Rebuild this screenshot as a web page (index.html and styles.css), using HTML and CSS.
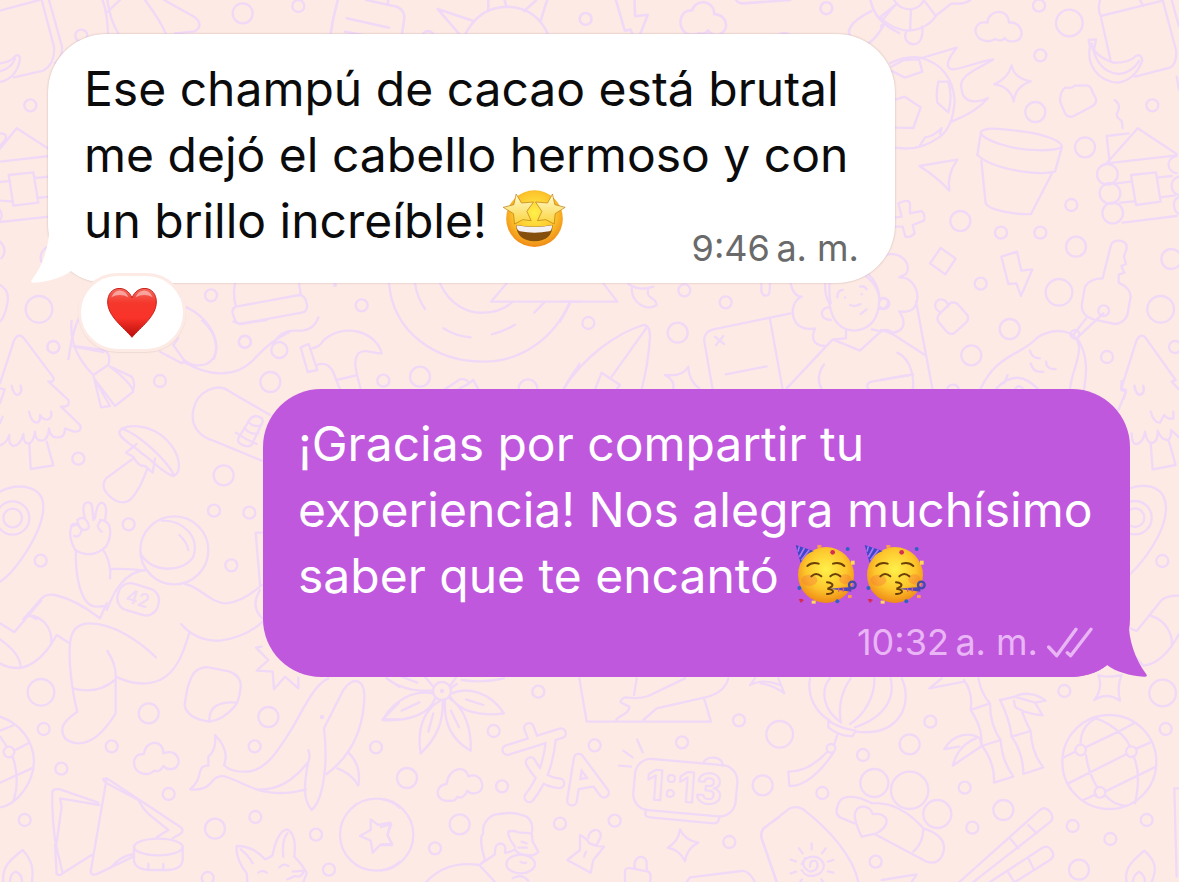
FILE: index.html
```html
<!DOCTYPE html>
<html lang="es">
<head>
    <meta charset="UTF-8">
    <meta name="viewport" content="width=device-width, initial-scale=1.0">
    <title>Chat</title>
    <link rel="stylesheet" href="styles.css">
</head>
<body>
    <!-- doodle wallpaper, one nested svg per area -->
    <svg class="wallpaper" viewBox="0 0 1179 882" preserveAspectRatio="xMidYMid slice" aria-hidden="true">
        <!-- top left -->
        <svg x="0" y="0" width="400" height="360" viewBox="0 0 1200 1080">
            <path d="M0 32L118 0M125 0L162 140Q166 190 130 212L42 232M147 0L186 140Q188 175 165 190M0 190Q35 185 45 168Q60 160 60 178Q50 235 0 246M0 214Q35 205 45 175"/>
            <path d="M308 0Q322 40 324 100M360 0L322 36M322 0Q330 60 355 100M435 0Q480 60 497 100M492 0L585 52Q612 76 585 94L525 100"/>
            <path d="M0 446L50 385L148 448M0 485L148 468M0 546L30 543M105 534L148 530M0 602L40 605M112 594L148 590M0 666L148 650M26 525L100 517L115 608L40 617ZM0 400Q25 400 15 420L0 438M0 630Q10 650 0 660M0 725Q25 750 4 775M142 740Q115 760 124 785"/>
            <path d="M0 855Q30 870 22 910Q15 950 0 965M205 1080C215 1010 225 970 245 940M560 922C620 950 670 1020 640 1080M520 1035L535 1015M222 1040L310 1056"/>
            <circle cx="728" cy="40" r="30"/><circle cx="895" cy="18" r="18"/><circle cx="244" cy="107" r="18"/><circle cx="91" cy="316" r="18"/>
            <circle cx="117" cy="928" r="40"/><circle cx="160" cy="1041" r="18"/>
        </svg>

        <!-- top edge -->
        <svg x="320" y="0" width="580" height="60" viewBox="0 0 1568 162">
            <path d="M48 0Q34 50 27 102M125 0L208 18Q230 28 228 50L220 102M184 0V10M72 49L187 75M68 86L150 101"/>
            <path d="M455 0V28M499 0L504 18M585 0L552 30M614 0L597 54M388 102Q425 20 504 18Q590 20 620 102M413 56L318 24L385 102"/>
            <path d="M850 0L852 44L886 40L862 102M800 0L824 83L840 80L848 102"/>
            <path d="M990 90C965 75 970 25 1006 28C1015 -4 1065 -2 1066 38C1105 38 1110 92 1070 95Q1055 92 1050 82Q1040 95 1025 90Q1005 98 990 90ZM1125 0Q1130 10 1145 9L1272 0"/>
            <path d="M1488 0Q1500 60 1568 90M1515 46L1560 10M1490 30C1430 60 1415 90 1445 110L1475 122M1524 68Q1500 110 1475 122"/>
            <circle cx="718" cy="51" r="16"/><circle cx="1369" cy="22" r="16"/><circle cx="292" cy="100" r="16"/><circle cx="1255" cy="116" r="26"/>
        </svg>

        <!-- right column -->
        <svg x="880" y="0" width="300" height="400" viewBox="0 0 900 1200">
            <path d="M0 50Q35 90 90 92Q145 85 170 45L215 10Q250 15 272 0M90 92L93 28M42 0Q60 30 93 28Q120 25 132 0M0 80L12 70M12 55L42 18M165 45L135 5M80 92C65 125 95 140 115 128Q130 115 127 80"/>
            <path d="M302 118C275 100 285 60 322 68C325 28 385 22 387 68C430 62 440 125 398 124Q380 125 374 114Q365 127 346 117Q325 130 302 118Z"/>
            <path d="M30 190Q80 165 125 174Q215 200 224 300Q220 380 180 410Q120 455 48 443M125 174L230 143C210 170 190 200 215 208C240 210 290 185 340 178C300 205 230 225 245 270C250 310 290 310 324 294Q290 335 215 365M33 200L72 180L117 178L127 215L75 233L33 212M175 245L205 245Q218 290 205 337L172 308Q168 275 175 245ZM48 298L74 290L122 322L100 384L48 383M118 440L135 412Q160 410 185 384L180 402"/>
            <path d="M395 196Q402 235 452 244Q405 260 401 305Q392 260 343 253Q385 235 395 196ZM556 262Q575 267 584 257L621 256Q633 258 637 275L648 296Q650 310 638 318L577 350Q562 352 555 340L540 304Q540 275 556 262Z"/>
            <path d="M303 395C320 380 360 387 425 394C500 403 545 425 546 440C530 455 430 455 370 435C320 420 300 405 303 395ZM303 395L292 465Q330 500 430 515Q490 524 525 515L546 440M304 482L317 610C325 630 410 645 453 642L515 522"/>
            <path d="M118 498L232 479Q200 525 208 572Q170 530 118 498ZM55 610Q85 595 90 610V640L125 633Q137 645 132 662L98 675L104 700Q90 715 76 710L68 680H48M48 652L65 650L55 610"/>
            <path d="M182 744L227 776L196 823L150 790ZM364 770L411 755L424 812L457 808L423 888L409 850L385 852ZM213 908Q230 905 238 918L262 945Q268 958 258 968L222 1000Q210 1005 200 995L175 965Q168 950 180 940ZM180 936C155 925 165 890 192 900Q208 910 203 920"/>
            <path d="M660 0Q652 30 662 48L692 182M662 48L848 2M780 0L790 18M848 0L888 150Q892 190 870 203L765 230M875 0L897 80M626 120L648 118L642 150Q660 175 700 188Q745 190 768 168Q785 160 787 182Q765 240 715 248C650 245 620 190 630 142ZM635 130Q650 215 715 222Q755 220 778 182M890 230L897 270M704 300Q725 315 712 338Q705 350 725 362L728 384"/>
            <path d="M680 408L746 400M680 408L688 478M680 490L773 385L890 462M680 490L890 466M708 550L752 545M720 608L762 604M832 533L875 528M840 592L885 586M728 668L890 648M753 525L828 517L842 605L768 615ZM890 468C855 475 860 515 890 520M895 530C868 540 868 575 895 585M895 592C875 600 880 635 897 642"/>
            <circle cx="682" cy="523" r="31"/><circle cx="690" cy="580" r="31"/><circle cx="698" cy="639" r="31"/>
            <path d="M668 835L693 735Q700 720 720 722Q742 725 740 745L732 770L738 792L724 798L733 818L716 824V848Q752 865 752 890L742 945Q732 970 705 972L640 958Q600 945 606 910L615 860Q630 835 668 835ZM618 955L580 1005M670 940L595 1010"/>
            <circle cx="671" cy="932" r="16"/><circle cx="585" cy="1003" r="13"/>
            <path d="M300 1170C350 1060 420 1070 475 1010C530 980 590 990 597 1040C600 1080 570 1130 570 1170M595 1020C625 1070 620 1120 612 1170M450 1052Q455 1075 480 1075M498 1085Q500 1110 527 1107M452 1090Q460 1120 490 1115M350 1165Q410 1100 475 1168M405 1168Q415 1150 428 1165M383 1125L372 1150"/>
            <path d="M18 764C70 755 95 795 78 822L58 832C100 830 125 880 105 920Q90 940 58 934C75 960 80 990 40 998M108 905L158 1170M0 990Q30 995 50 1010L135 1065M52 1058C90 1075 105 1130 98 1170M0 1140L100 1123"/>
            <path d="M724 1165L770 1020Q785 995 800 1018L887 1140L875 1145L900 1172M724 1165L738 1170L730 1200M764 1157Q768 1190 785 1182Q795 1175 790 1162"/>
            <circle cx="12" cy="911" r="16"/><circle cx="477" cy="17" r="18"/><circle cx="568" cy="69" r="40"/><circle cx="481" cy="166" r="18"/><circle cx="466" cy="336" r="30"/><circle cx="817" cy="316" r="18"/><circle cx="615" cy="442" r="30"/><circle cx="574" cy="615" r="18"/><circle cx="241" cy="663" r="30"/><circle cx="363" cy="698" r="18"/><circle cx="481" cy="698" r="18"/><circle cx="588" cy="740" r="30"/><circle cx="874" cy="777" r="30"/><circle cx="302" cy="851" r="18"/><circle cx="537" cy="877" r="40"/><circle cx="842" cy="928" r="40"/><circle cx="389" cy="987" r="30"/><circle cx="274" cy="1066" r="30"/><circle cx="681" cy="1071" r="18"/><circle cx="885" cy="1041" r="18"/><circle cx="219" cy="1172" r="18"/>
        </svg>

        <!-- left: tree, mushroom, astronaut -->
        <svg x="0" y="320" width="290" height="300" viewBox="0 0 870 900">
            <path d="M0 190L42 62Q55 35 72 55L160 172Q165 188 145 184L205 240Q212 262 183 260L240 315Q248 335 222 335L195 325Q195 355 170 352Q150 352 147 325Q145 360 125 362Q105 362 105 335Q100 372 82 370Q70 368 70 342Q60 378 40 378Q25 375 28 345Q20 370 0 376M0 250L14 208L0 205M35 197Q42 228 55 224Q68 218 62 197M87 275Q95 310 112 308Q122 305 120 285Q130 302 145 298Q158 292 153 275M0 310L8 290M88 370L92 447L160 436L140 365"/>
            <path d="M215 0Q205 90 280 165L325 135Q335 100 310 90L220 78M280 165L303 262L330 258L282 175L345 258L400 215Q395 190 330 140L395 170Q408 190 398 215M480 95L545 130L553 122L520 75M605 0C660 50 660 110 620 132Q580 145 550 118M550 125C620 165 700 180 760 120C800 75 830 55 870 35M700 5L720 12L800 0"/>
            <circle cx="838" cy="90" r="24"/>
            <path d="M358 335C370 310 450 310 500 360C545 405 545 460 520 468C490 460 450 415 425 400C400 375 355 355 358 335ZM365 325C420 345 500 420 522 465M410 372L378 398L400 410Q415 440 435 438L458 458L465 415M400 415L318 475Q300 500 325 525Q360 560 390 540Q420 510 442 445"/>
            <path d="M810 285L690 215C650 185 590 215 580 270C570 320 600 350 640 362L785 422M765 288Q790 290 788 305L755 375Q740 385 718 370Q710 360 718 350L748 300Q755 290 765 288ZM745 305Q760 325 785 315M735 325Q750 345 775 340M708 338Q735 358 770 372"/>
            <path d="M0 515C60 485 130 500 130 560C130 640 40 760 0 785"/><circle cx="38" cy="594" r="28"/><circle cx="38" cy="594" r="50"/>
            <path d="M225 690C205 650 210 630 215 615Q230 605 242 625M255 595Q245 560 255 550Q275 540 277 565L280 600M285 595Q290 550 305 548Q325 552 315 600M300 600C340 600 335 650 318 680Q275 720 225 690M232 600Q250 585 262 605Q275 630 250 630Q235 625 232 600ZM215 620Q235 605 245 630Q240 655 222 648M300 605Q285 620 305 635M228 690C225 760 240 860 290 860L320 858M310 690Q335 730 330 775M335 747Q390 745 430 752M320 870C340 820 370 755 438 750M68 900L125 835Q140 820 165 825Q230 840 300 895L320 850"/>
            <circle cx="523" cy="691" r="102"/><path d="M422 700C450 760 550 760 580 710C600 650 550 600 485 602M538 645Q560 665 565 690M555 792C600 800 630 850 680 850Q730 845 785 795M85 885L110 897M787 638H767L780 795M780 810Q750 860 787 895"/>
            <rect x="352" y="797" width="125" height="82" rx="36" transform="rotate(17 415 838)"/>
            <text class="doodle-number" x="378" y="856" font-size="56" transform="rotate(17 415 838)">42</text>
            <circle cx="160" cy="81" r="18"/><circle cx="480" cy="183" r="18"/><circle cx="734" cy="66" r="18"/><circle cx="811" cy="186" r="30"/><circle cx="235" cy="416" r="18"/><circle cx="671" cy="466" r="30"/><circle cx="642" cy="572" r="18"/><circle cx="748" cy="578" r="18"/><circle cx="386" cy="613" r="18"/><circle cx="122" cy="722" r="18"/><circle cx="694" cy="736" r="18"/>
        </svg>

        <!-- bottom left: boot, whale, fox -->
        <svg x="0" y="600" width="400" height="282" viewBox="0 0 1200 846">
            <path d="M125 0L43 96L0 70M85 45C140 50 160 100 152 135Q110 195 60 204Q25 205 0 190M0 118Q60 160 62 200M152 135L170 105L208 130M232 335C215 270 205 180 210 130Q215 70 270 70C340 70 420 125 468 172M322 153Q350 195 347 235V340C310 400 270 430 235 430Q180 425 188 380Q195 360 232 335M218 265Q290 285 345 240M347 230Q420 265 480 240C530 215 550 160 568 98M543 72Q590 125 660 122Q740 110 788 65"/>
            <path d="M0 350C60 370 100 420 102 485C100 550 50 615 0 622M0 392L42 375M0 410Q12 425 20 440M42 452L85 430M38 470C55 520 55 560 40 605M0 548L95 505"/><circle cx="27" cy="456" r="16"/>
            <path d="M575 230Q590 200 625 202L690 215Q725 230 722 262Q718 300 705 318Q670 360 628 365Q560 355 554 315Q560 260 575 230ZM628 365Q625 300 712 308"/>
            <path d="M785 140L768 143L805 180L770 212L818 215L822 268L855 230L895 265V232"/>
            <path d="M428 521C395 515 390 460 432 462C435 420 490 415 490 460C540 440 550 505 515 507Q500 510 490 498Q480 518 462 512Q450 525 428 521Z"/>
            <path d="M985 235C940 255 910 330 870 395C830 460 790 520 730 515Q690 515 672 495Q690 450 645 405Q650 450 625 470V497Q605 495 600 515Q595 550 570 568C610 572 625 560 640 540C670 510 700 545 770 568Q840 590 918 568M780 568Q860 570 925 485M925 450Q932 470 925 485C910 560 910 600 935 630C970 600 985 490 972 385Q1000 330 1030 270C1060 225 1100 235 1092 310C1085 400 1050 470 980 522M1045 458Q1085 495 1075 557Q1055 520 1012 505"/>
            <path d="M1200 305L1148 358H1200M1160 235L1200 262"/>
            <path d="M298 615L180 595L185 620L168 740Q155 650 157 575Q160 565 180 568L295 608M168 735L188 820Q180 830 170 822L165 735M188 820L275 765M320 535L272 815Q275 830 295 820L400 770M320 535Q300 535 320 550L415 600Q430 630 455 650L505 690L470 712M320 535L540 680Q555 692 540 702L518 715M335 800Q360 770 400 762"/>
            <ellipse cx="475" cy="741" rx="73" ry="25"/><path d="M402 741V785Q410 810 450 810H505Q545 808 548 780V741M445 792V805M490 792V805M10 846C5 800 30 780 68 750C100 785 100 810 96 846M30 846Q30 820 48 815Q68 825 66 846"/>
            <circle cx="1128" cy="704" r="108"/><path d="M1112 658L1135 675L1170 668L1163 705L1176 735L1140 735L1118 758L1112 722L1080 708L1112 690Z"/>
            <path d="M742 846L740 820Q706 775 710 738C745 738 775 755 795 778Q812 772 818 765C825 725 840 692 860 688C882 695 888 730 883 770Q908 795 920 820L910 846M722 748Q745 765 758 790M850 770Q845 720 862 700M838 802Q852 788 865 798M775 818Q788 808 800 818M878 815L912 812Q905 835 885 828L862 838"/>
            <circle cx="123" cy="277" r="40"/><circle cx="446" cy="340" r="30"/><circle cx="131" cy="387" r="18"/><circle cx="335" cy="439" r="18"/><circle cx="184" cy="506" r="18"/><circle cx="805" cy="351" r="30"/><circle cx="764" cy="439" r="18"/><circle cx="1128" cy="442" r="18"/><circle cx="506" cy="582" r="18"/><circle cx="74" cy="660" r="18"/><circle cx="645" cy="686" r="30"/><circle cx="766" cy="651" r="18"/><circle cx="948" cy="704" r="18"/><circle cx="987" cy="809" r="18"/><circle cx="623" cy="834" r="18"/><circle cx="966" cy="351" r="3"/>
        </svg>

        <!-- bottom middle: flower, letters, clock -->
        <svg x="380" y="670" width="400" height="212" viewBox="0 0 1200 636">
            <circle cx="186" cy="63" r="27"/><circle cx="186" cy="63" r="3"/>
            <path d="M160 70C100 60 40 90 8 150C90 155 150 130 165 85M180 92C130 120 110 180 122 250C175 200 190 150 188 92M195 90C190 160 215 210 272 242C275 170 250 110 208 85M215 70C260 50 330 65 372 130C300 140 240 125 212 82M65 122L118 97M160 130L145 185M213 122L237 172M258 88L310 105M160 50L135 20M20 25Q70 65 155 62M65 20L112 38M212 55L230 42M212 45L228 22M245 30Q310 40 372 25"/>
            <path class="doodle-outer" d="M447 174L459 206M382 240L543 190M513 205C505 290 480 340 448 382M452 277C470 310 490 335 538 340"/>
            <path class="doodle-inner" d="M447 174L459 206M382 240L543 190M513 205C505 290 480 340 448 382M452 277C470 310 490 335 538 340"/>
            <path class="doodle-outer" d="M576 392L596 266L672 368M584 345L640 335"/>
            <path class="doodle-inner" d="M576 392L596 266L672 368M584 345L640 335"/>
            <rect x="762" y="276" width="308" height="154" rx="48" transform="rotate(5 916 353)"/>
            <path d="M970 280Q975 262 1000 263Q1030 265 1028 288M798 418L796 430Q795 440 810 442L1000 460Q1018 460 1018 440M717 287L753 290M730 242L758 262M771 208L788 247"/>
            <text class="doodle-text" x="798" y="396" font-size="124" transform="rotate(4 916 353)">1:13</text>
            <path d="M210 392C165 400 160 345 200 342C205 290 260 285 265 320C305 300 325 365 285 370Q270 372 262 362Q250 390 232 380Q225 395 210 392Z"/>
            <circle cx="-8" cy="494" r="108"/><path d="M0 472L34 462L22 495L37 522L0 524"/>
            <path d="M315 570C300 520 300 500 310 490C305 460 330 430 360 432Q400 425 425 435C455 440 460 470 455 490L458 515L475 545Q462 560 440 555Q415 555 405 538Q385 550 375 548Q380 520 360 520Q343 522 345 553M385 485Q382 500 405 530M385 485Q400 480 415 487Q435 488 455 490M315 570L298 585L345 636M298 585Q200 570 138 636M345 553L298 585M425 515L440 520M415 533H440"/><ellipse cx="422" cy="582" rx="43" ry="28"/><path d="M422 575Q430 582 438 578M398 625Q425 610 445 632"/>
            <path d="M600 495Q620 505 628 520Q650 530 672 530L640 570L632 608L562 570L600 540ZM625 505C625 475 665 470 662 500L650 525M618 545L612 560M735 636V600Q740 592 755 595L805 605Q815 610 810 636M765 595C755 555 800 550 800 580V602"/>
            <path d="M900 478Q915 512 955 518Q920 535 915 574Q900 540 863 533Q895 515 900 478ZM1200 440L1150 475Q1140 490 1145 505L1190 636M920 636L930 622L1085 603Q1105 600 1125 636"/>
            <path d="M598 25L620 155H993L972 85M770 25L762 75M915 25L805 78Q780 88 735 82Q720 90 722 97Q735 105 748 110Q750 125 720 140Q710 145 708 152M790 150L830 115L985 80Q1035 65 1045 25M1110 45Q1150 25 1200 45M1125 25L1110 45"/>
            <circle cx="475" cy="65" r="18"/><circle cx="341" cy="183" r="18"/><circle cx="81" cy="324" r="30"/><circle cx="366" cy="349" r="18"/><circle cx="644" cy="226" r="18"/><circle cx="906" cy="217" r="18"/><circle cx="1077" cy="151" r="18"/><circle cx="1148" cy="346" r="30"/><circle cx="239" cy="463" r="30"/><circle cx="165" cy="535" r="18"/><circle cx="540" cy="461" r="18"/><circle cx="704" cy="452" r="18"/><circle cx="1048" cy="516" r="18"/>
        </svg>

        <!-- bottom right: lantern, bamboo, globe -->
        <svg x="760" y="670" width="419" height="212" viewBox="0 0 1257 636">
            <path d="M55 25L73 70Q40 45 0 40M150 25C140 80 170 130 210 152M210 25C180 60 190 120 240 155M272 25C240 70 235 120 243 158M343 25C345 70 320 130 270 162M392 25C405 80 380 140 285 172M425 25C460 100 420 200 290 185M205 152Q240 175 287 182L278 198Q240 200 205 172ZM232 195L222 225M202 245C170 280 130 305 85 305L88 348C130 350 180 310 220 248"/>
            <circle cx="213" cy="235" r="13"/>
            <circle cx="343" cy="339" r="42"/><circle cx="449" cy="361" r="56"/><circle cx="532" cy="432" r="42"/>
            <path d="M335 400C400 395 450 430 490 475C555 495 560 530 545 560Q530 585 500 575L345 493M490 475Q490 520 460 545M335 400C290 375 250 375 238 395Q220 430 240 442L283 460M305 500Q285 460 284 435Q288 408 312 410Q332 412 338 432Q372 428 380 450Q382 472 350 490Q325 495 305 500Z"/>
            <path d="M50 636L5 505Q0 485 15 472L85 418Q105 405 130 418C210 480 280 560 295 636M125 582C135 555 180 550 192 585C190 620 140 630 125 600M150 590Q150 565 170 575Q180 600 150 605Q120 590 135 565M155 520V538M117 535L128 550M197 535L186 550M92 569L108 574M220 570L204 575M92 610L108 605M220 608L204 604M120 636L126 628M190 636L184 628M365 630L470 613L455 636"/>
            <path d="M612 30Q640 70 632 120L690 100Q665 75 655 25M632 120C665 170 665 200 665 228L722 210C700 180 690 140 690 100M668 230Q705 280 702 338L760 320Q725 270 722 210M508 55L545 25M508 55L612 35M553 237C580 190 630 185 660 205L665 228L578 287Q595 225 648 205M553 237L598 230M720 90Q750 150 755 200L812 183Q790 140 785 120M755 200Q790 250 790 312L850 292Q815 250 812 183M720 90L765 80C790 65 830 70 857 92L825 98M765 80L825 98L848 136Q790 130 765 110L762 92"/>
            <circle cx="1048" cy="276" r="141"/><path d="M1008 145Q960 170 962 225M1008 145Q1050 160 1075 185Q1100 205 1110 230M1075 185L1125 158M1075 185L975 233M1130 235L1170 218M945 245L912 262M925 340L1100 252M978 255Q985 310 1012 352M1120 258Q1145 310 1125 400M1035 365L1188 290M970 390L1008 373M1035 375Q1060 405 1100 408"/>
            <circle cx="962" cy="240" r="16"/><circle cx="1114" cy="245" r="16"/><circle cx="1020" cy="367" r="16"/>
            <path d="M1015 15Q1040 25 1085 15Q1070 50 1080 92Q1040 65 1003 90Q1030 55 1015 15M598 636L840 420Q855 408 870 425Q885 445 868 458L640 636M750 505L775 535M805 465L830 490M690 636L845 535Q865 522 877 545Q885 560 870 570L765 636M745 608L760 632M805 565L820 595M1100 636C1090 595 1120 570 1153 542C1190 575 1190 600 1175 636M1118 636Q1120 615 1137 605Q1155 615 1155 636M1257 355H1243L1250 620"/>
            <circle cx="59" cy="193" r="40"/><circle cx="309" cy="255" r="18"/><circle cx="449" cy="223" r="30"/><circle cx="511" cy="155" r="18"/><circle cx="187" cy="369" r="18"/><circle cx="614" cy="353" r="18"/><circle cx="730" cy="420" r="30"/><circle cx="637" cy="473" r="18"/><circle cx="347" cy="575" r="18"/><circle cx="913" cy="63" r="18"/><circle cx="1208" cy="69" r="40"/><circle cx="1217" cy="177" r="18"/><circle cx="1160" cy="450" r="18"/><circle cx="938" cy="468" r="18"/><circle cx="1051" cy="507" r="18"/><circle cx="957" cy="599" r="30"/>
        </svg>

        <!-- between the bubbles, left: hat, hammer, plate -->
        <svg x="180" y="270" width="400" height="130" viewBox="0 0 1200 390">
            <path d="M165 40Q158 80 168 110M357 40L362 72M168 110L358 75Q375 75 380 100Q385 125 365 128L178 162Q165 158 158 130Q155 115 168 110M280 220C300 185 325 180 350 182Q400 185 415 142"/>
            <path d="M362 232L386 222L412 300L383 306ZM397 235Q420 230 430 212C490 155 590 185 605 250C575 250 555 235 535 250Q520 270 530 310L542 358M410 285Q450 270 465 320L480 358M470 330L528 316"/>
            <path d="M627 40C640 190 770 275 910 275C1020 275 1120 210 1170 95M780 40C810 110 870 130 910 128Q960 128 995 98M705 40Q710 80 735 117M790 175Q830 200 872 202M935 193Q970 185 1005 164M980 40L933 95H1200M1093 97L1063 128M795 358L840 328Q860 325 868 340L835 358M860 345L880 330L895 358M1150 358Q1170 320 1200 280"/>
            <circle cx="93" cy="76" r="18"/><circle cx="195" cy="215" r="18"/><circle cx="545" cy="106" r="18"/><circle cx="610" cy="332" r="18"/><circle cx="720" cy="320" r="30"/><circle cx="1044" cy="356" r="28"/><circle cx="465" cy="45" r="3"/>
        </svg>

        <!-- between the bubbles, right: surfboard, card, person -->
        <svg x="560" y="270" width="400" height="130" viewBox="0 0 1200 390">
            <path d="M0 95H172L130 40M30 100L0 155M205 42Q240 65 280 50M215 55C215 100 260 125 290 105C290 80 255 90 265 55M604 40V65Q610 82 625 75Q630 70 630 40"/>
            <path d="M10 358C70 260 170 190 250 165Q270 165 270 200Q265 280 245 358M262 170L155 320M105 358L125 308L180 345L170 358M315 315Q370 320 385 290Q385 330 420 358M315 315Q345 330 340 358"/>
            <path d="M458 358L433 215Q430 185 460 178L692 130M630 148L668 358M497 313L620 289M465 200L492 222M490 198L468 225"/>
            <path d="M692 40Q700 80 725 80C680 100 690 190 765 175Q745 225 795 228M680 355L818 208L900 242L965 182Q985 175 1000 190M858 180V205L818 208M935 178L965 185M795 40Q795 80 808 100Q820 180 885 182Q955 175 958 90Q955 40 905 10M810 25Q805 70 812 100M958 80Q955 40 925 12M808 112C780 110 775 150 812 150M960 85C995 75 990 125 955 115M832 82Q832 60 848 60M900 50Q912 45 920 58M870 105Q885 112 902 102M902 132L920 118M855 82V83M905 72V73M792 283Q765 320 785 358M925 358Q915 340 935 335L1050 315"/>
            <circle cx="85" cy="159" r="18"/><circle cx="373" cy="61" r="18"/><circle cx="497" cy="97" r="18"/><circle cx="353" cy="188" r="30"/>
        </svg>

        <!-- right edge -->
        <svg x="1090" y="380" width="89" height="320" viewBox="0 0 267 960">
            <path d="M95 0L93 30L108 35L85 90M133 20Q140 48 152 44Q165 38 160 17M182 95Q192 130 210 128L222 105Q235 120 250 115V95M125 160Q125 195 140 192Q160 188 165 155Q172 195 190 188Q205 180 203 152Q215 182 235 180Q245 170 243 150L267 172M182 190L188 268L257 255L237 185M118 325C180 305 230 325 228 390C225 460 160 545 118 585M120 745L140 753L215 660Q235 645 267 647M182 707C225 720 250 760 245 800M267 762Q220 850 160 857M118 810L160 857"/>
            <circle cx="135" cy="413" r="28"/><circle cx="135" cy="413" r="50"/><circle cx="217" cy="543" r="18"/>
        </svg>
    </svg>

    <main class="chat">
        <div class="message incoming">
            <svg class="tail" viewBox="0 0 240 201" aria-hidden="true">
                <path d="M58 0V31C58 91 40 146 5 193Q0 201 12 200C55 197 95 186 123 165C150 189 190 200 240 200V0Z"/>
            </svg>
            <p class="text">Ese champú de cacao está brutal me dejó el cabello hermoso y con un brillo increíble!
                <svg class="emoji" viewBox="60 50 200 186" role="img" aria-label="cara con estrellas">
                    <defs>
                        <radialGradient id="face" cx="0.5" cy="0.4" r="0.6">
                            <stop offset="0" stop-color="#fff04a"/>
                            <stop offset="0.6" stop-color="#fdc62c"/>
                            <stop offset="1" stop-color="#ef8a16"/>
                        </radialGradient>
                        <linearGradient id="star" x1="0" y1="0" x2="0" y2="1">
                            <stop offset="0" stop-color="#fffbd0"/>
                            <stop offset="1" stop-color="#fbd33b"/>
                        </linearGradient>
                    </defs>
                    <circle cx="163" cy="142" r="85" fill="url(#face)"/>
                    <path d="M108 161Q163 171 217 161Q217 208 163 210Q110 208 108 161Z" fill="#85500c"/>
                    <path d="M109 162Q163 172 216 162Q215 180 207 180Q163 188 119 180Q110 178 109 162Z" fill="#f4f1f3"/>
                    <g fill="url(#star)" stroke="#b9770f" stroke-width="2" stroke-linejoin="round">
                        <path d="M108 68L124 95L160 92L140 120L153 148L128 145L103 158L100 127L69 108L101 100Z"/>
                        <path d="M217 68L202 95L166 92L185 120L172 148L197 145L222 158L225 127L255 108L224 100Z"/>
                    </g>
                </svg>
            </p>
            <div class="meta"><time datetime="09:46">9:46&#8239;a. m.</time></div>
            <button class="reaction" type="button" aria-label="Me encanta">
                <svg class="heart" viewBox="0 0 150 150" aria-hidden="true">
                    <defs>
                        <linearGradient id="heart" x1="0" y1="0" x2="0" y2="1">
                            <stop offset="0" stop-color="#f4685c"/>
                            <stop offset="0.3" stop-color="#f5372c"/>
                            <stop offset="0.6" stop-color="#fa3329"/>
                            <stop offset="1" stop-color="#b90d0c"/>
                        </linearGradient>
                    </defs>
                    <path d="M75 148C50 118 2 85 2 42C2 -8 60 -12 75 30C90 -12 148 -8 148 42C148 85 100 118 75 148Z" fill="url(#heart)" stroke="#c9201a" stroke-width="3"/>
                    <path d="M13 28Q22 6 42 8Q58 10 64 28Q38 14 13 28ZM137 28Q128 6 108 8Q92 10 86 28Q112 14 137 28Z" fill="#fff" opacity="0.45"/>
                </svg>
            </button>
        </div>

        <div class="message outgoing">
            <svg class="tail" viewBox="0 0 240 201" aria-hidden="true">
                <path d="M58 0V31C58 91 40 146 5 193Q0 201 12 200C55 197 95 186 123 165C150 189 190 200 240 200V0Z"/>
            </svg>
            <p class="text">¡Gracias por compartir tu experiencia! Nos alegra muchísimo saber que te encantó
                <span class="emojis"><svg class="emoji party" viewBox="40 36 207 186" role="img" aria-label="cara de fiesta">
                    <g id="party">
                        <circle cx="142" cy="132" r="84" fill="url(#face)"/>
                        <g fill="#f5703a" opacity="0.35">
                            <ellipse cx="92" cy="148" rx="24" ry="17"/>
                            <ellipse cx="200" cy="145" rx="18" ry="15"/>
                        </g>
                        <path d="M51 42L105 60Q75 70 66 96Z" fill="#3f46c8"/>
                        <path d="M62 46L58 62M77 51L62 78M92 56L68 88" stroke="#a879f0" stroke-width="5" fill="none"/>
                        <g stroke="#6b3f08" stroke-width="6" stroke-linecap="round" fill="none">
                            <path d="M86 105Q100 92 120 98M163 98Q183 92 197 105M98 136Q112 122 128 136M155 136Q170 122 185 136M145 154Q166 156 160 166Q148 173 146 173Q165 176 163 183Q158 190 145 189"/>
                        </g>
                        <path d="M152 173L218 168V182Z" fill="#5146b8"/>
                        <circle cx="221" cy="162" r="10" fill="none" stroke="#434aa8" stroke-width="7"/>
                        <path d="M180 170V182M194 169V182" stroke="#d65a86" stroke-width="4"/>
                        <g fill="#2f62c4">
                            <circle cx="207" cy="54" r="6"/><circle cx="62" cy="171" r="6"/><circle cx="176" cy="211" r="6"/>
                        </g>
                        <g fill="#d42c55">
                            <circle cx="162" cy="64" r="7"/><path d="M60 205L68 203L76 207L67 216Z"/>
                        </g>
                        <g fill="#ffd95a">
                            <rect x="217" y="89" width="11" height="12"/><rect x="99" y="209" width="12" height="9"/>
                        </g>
                        <g fill="#fb9a50">
                            <rect x="116" y="42" width="12" height="9"/><rect x="208" y="192" width="11" height="9"/>
                        </g>
                    </g>
                </svg><svg class="emoji party" viewBox="40 36 207 186" role="img" aria-label="cara de fiesta">
                    <use href="#party"/>
                </svg></span>
            </p>
            <div class="meta">
                <time datetime="10:32">10:32&#8239;a. m.</time>
                <svg class="ticks" viewBox="800 282 144 96" role="img" aria-label="Leído">
                    <path d="M808 345L832 371L890 292M864 362L874 371L935 292"/>
                </svg>
            </div>
        </div>
    </main>
</body>
</html>
```

FILE: styles.css
```css
* {
    box-sizing: border-box;
}
body {
    margin: 0;
    min-height: 100vh;
    position: relative;
    overflow-x: hidden;
    background-color: #fdeae4;
    font-family: "Inter", "Liberation Sans", sans-serif;
}
.wallpaper {
    position: absolute;
    top: 0;
    left: 0;
    width: 100%;
    height: 100%;
    fill: none;
    stroke: #f0d9f7;
    stroke-width: 7;
    stroke-linecap: round;
    stroke-linejoin: round;
}
.doodle-text {
    font-family: "Inter", sans-serif;
    font-weight: 700;
    stroke-width: 6;
}
.doodle-number {
    font-family: "Inter", sans-serif;
    font-weight: 400;
    fill: #f0d9f7;
    stroke-width: 1;
}
.doodle-outer {
    stroke-width: 36;
}
.doodle-inner {
    stroke: #fdeae4;
    stroke-width: 22;
}
.chat {
    position: relative;
    display: flex;
    flex-direction: column;
    gap: 106px;
    padding: 34px 49px 48px 48px;
}
.message {
    position: relative;
    isolation: isolate;
    padding: 22px 36px 15px;
    border-radius: 58px;
}
.incoming {
    align-self: flex-start;
    max-width: 847px;
    background: #fff;
    color: #0b0b0b;
    box-shadow: 0 0 2px rgba(120, 80, 70, 0.4);
}
.outgoing {
    align-self: flex-end;
    max-width: 867px;
    padding-left: 35px;
    background: #c058de;
    color: #fff;
}
.text {
    margin: 0;
    font-size: 48px;
    line-height: 66px;
}
.emoji {
    width: 67px;
    height: 62px;
    margin: -4px 0;
    vertical-align: -8px;
}
.emojis {
    white-space: nowrap;
}
.party {
    width: 69px;
}
.tail {
    position: absolute;
    z-index: -1;
    left: -18px;
    bottom: 0;
    width: 80px;
    height: 67px;
    fill: #fff;
}
.outgoing .tail {
    left: auto;
    right: -18px;
    transform: scaleX(-1);
    fill: #c058de;
}
.meta {
    display: flex;
    justify-content: flex-end;
    align-items: center;
    gap: 8px;
    font-size: 36px;
    line-height: 40px;
}
.incoming .meta {
    margin-top: -26px;
    color: #6a6a6a;
}
.outgoing .meta {
    margin-top: 13px;
    color: #e9b5f5;
}
.ticks {
    flex: none;
    width: 48px;
    height: 32px;
    fill: none;
    stroke: #e9b5f5;
    stroke-width: 10;
    stroke-linecap: round;
    stroke-linejoin: round;
}
.reaction {
    position: absolute;
    left: 30px;
    top: 239px;
    width: 108px;
    height: 79px;
    display: flex;
    justify-content: center;
    align-items: center;
    padding: 0;
    border: 3px solid #fdeae4;
    border-radius: 40px;
    background: #fff;
    box-shadow: 0 1px 1px rgba(120, 80, 70, 0.1);
    cursor: pointer;
}
.heart {
    width: 50px;
    height: 50px;
}
```
